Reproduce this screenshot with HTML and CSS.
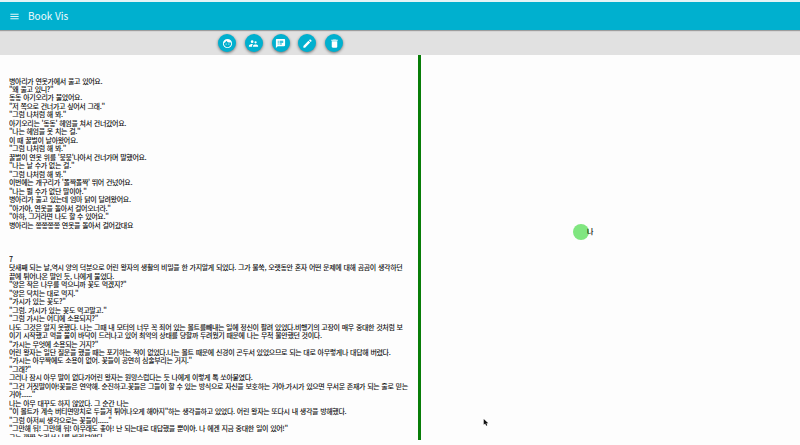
FILE: index.html
```
<!DOCTYPE html>
<html lang="ko">
<head>
<meta charset="utf-8">
<title>Book Vis</title>
<link rel="stylesheet" href="styles.css">
</head>
<body>
<header class="appbar">
  <svg class="menu" viewBox="0 0 24 24"><path d="M3 18h18v-2H3v2zm0-5h18v-2H3v2zm0-7v2h18V6H3z"/></svg>
  <h1 class="title">Book Vis</h1>
</header>
<nav class="toolbar">
  <button class="fab" aria-label="Face"><svg viewBox="0 0 24 24"><path d="M9 11.75a1.25 1.25 0 1 0 0 2.5 1.25 1.25 0 0 0 0-2.5zm6 0a1.25 1.25 0 1 0 0 2.5 1.25 1.25 0 0 0 0-2.5zM12 2a10 10 0 1 0 0 20 10 10 0 0 0 0-20zm0 18c-4.41 0-8-3.59-8-8 0-.29.02-.58.05-.86 2.36-1.05 4.23-2.98 5.21-5.37a9.97 9.97 0 0 0 10.41 3.97c.21.71.33 1.47.33 2.26 0 4.41-3.59 8-8 8z"/></svg></button>
  <button class="fab" aria-label="People"><svg viewBox="0 0 24 24"><path d="M16.5 12a2.5 2.5 0 1 0 0-5 2.5 2.5 0 0 0 0 5zM9 11a3 3 0 1 0 0-6 3 3 0 0 0 0 6zm7.5 3c-1.83 0-5.5.92-5.5 2.75V19h11v-2.25c0-1.83-3.67-2.75-5.5-2.75zM9 13c-2.33 0-7 1.17-7 3.5V19h7v-2.25c0-.85.33-2.34 2.37-3.47C10.500 13.100 9.660 13 9 13z"/></svg></button>
  <button class="fab" aria-label="Speech"><svg viewBox="0 0 24 24"><path d="M20 2H4c-1.100 0-1.990.9-1.990 2L2 22l4-4h14c1.100 0 2-.9 2-2V4c0-1.100-.9-2-2-2zM8 14H6v-2h2v2zm0-3H6V9h2v2zm0-3H6V6h2v2zm7 6h-5v-2h5v2zm3-3h-8V9h8v2zm0-3h-8V6h8v2z"/></svg></button>
  <button class="fab" aria-label="Edit"><svg viewBox="0 0 24 24"><path d="M3 17.250V21h3.750L17.810 9.940l-3.750-3.750L3 17.250zM20.710 7.040a1 1 0 0 0 0-1.410l-2.340-2.340a1 1 0 0 0-1.410 0l-1.830 1.830 3.750 3.750 1.830-1.830z"/></svg></button>
  <button class="fab" aria-label="Delete"><svg viewBox="0 0 24 24"><path d="M6 19c0 1.100.9 2 2 2h8c1.100 0 2-.9 2-2V7H6v12zM19 4h-3.500l-1-1h-5l-1 1H5v2h14V4z"/></svg></button>
</nav>
<main class="panes">
<section class="reader"><div class="text">병아리가 연못가에서 울고 있어요.
"왜 울고 있니?"
동동 아기오리가 물었어요.
"저 쪽으로 건너가고 싶어서 그래."
"그럼 나처럼 해 봐."
아기오리는 '동동' 헤엄을 쳐서 건너갔어요.
"나는 헤엄을 못 치는 걸."
이 때 꿀벌이 날아왔어요.
"그럼 나처럼 해 봐."
꿀벌이 연못 위를 '붕붕'나아서 건너가며 말했어요.
"나는 날 수가 없는 걸."
"그럼 나처럼 해 봐."
이번에는 개구리가 '폴짝폴짝' 뛰어 건넜어요.
"나는 뛸 수가 없단 말이야."
병아리가 울고 있는데 엄마 닭이 달려왔어요.
"아가야, 연못을 돌아서 걸어오너라."
"아하, 그거라면 나도 할 수 있어요."
병아리는 쫑쫑쫑쫑 연못을 돌아서 걸어갔대요



7
닷새째 되는 날,역시 양의 덕분으로 어린 왕자의 생활의 비밀을 한 가지알게 되었다. 그가 불쑥, 오랫동안 혼자 어떤 문제에 대해 곰곰이 생각하던
끝에 튀어나온 말인 듯, 나에게 물었다.
"양은 작은 나무를 먹으니까 꽃도 먹겠지?"
"양은 닥치는 대로 먹지."
"가시가 있는 꽃도?"
"그럼. 가시가 있는 꽃도 먹고말고."
"그럼 가시는 어디에 소용되지?"
나도 그것은 알지 못했다. 나는 그때 내 모터의 너무 꼭 죄어 있는 볼트를빼내는 일에 정신이 팔려 있었다.비행기의 고장이 매우 중대한 것처럼 보
이기 시작했고 먹을 물이 바닥이 드러나고 있어 최악의 상태를 당할까 두려웠기 때문에 나는 무척 불안했던 것이다.
"가시는 무엇에 소용되는 거지?"
어린 왕자는 일단 질문을 했을 때는 포기하는 적이 없었다.나는 볼트 때문에 신경이 곤두서 있었으므로 되는 대로 아무렇게나 대답해 버렸다.
"가시는 아무짝에도 소용이 없어. 꽃들이 공연히 심술부리는 거지."
"그래?"
그러나 잠시 아무 말이 없다가어린 왕자는 원망스럽다는 듯 나에게 이렇게 톡 쏘아붙였다.
"그건 거짓말이야!꽃들은 연약해. 순진하고.꽃들은 그들이 할 수 있는 방식으로 자신을 보호하는 거야.가시가 있으면 무서운 존재가 되는 줄로 믿는
거야......"
나는 아무 대꾸도 하지 않았다. 그 순간 나는
"이 볼트가 계속 버티면망치로 두들겨 튀어나오게 해야지"하는 생각을하고 있었다. 어린 왕자는 또다시 내 생각을 방해했다.
"그럼 아저씨 생각으로는 꽃들이......"
"그만해 둬! 그만해 둬! 아무래도 좋아! 난 되는대로 대답했을 뿐이야. 나 에겐 지금 중대한 일이 있어!"
그는 깜짝 놀라서 나를 바라보았다.</div></section>
<section class="graph">
  <div class="node"></div><span class="label">나</span>
  <svg class="cursor" viewBox="0 0 10 14"><path d="M1 0v10l2.500-2 1.800 4 2-1-1.800-3.500H9z"/></svg>
</section>
</main>
</body>
</html>
```
FILE: styles.css
```
* { box-sizing: border-box; }
body {
  margin: 0;
  height: 445px;
  overflow: hidden;
  background: #fdfdfd;
  color: #111;
  font-family: "Noto Sans CJK KR", sans-serif;
}
.appbar {
  position: relative;
  display: flex;
  align-items: center;
  height: 30px;
  padding-left: 9px;
  border-top: 2px solid #e4f3f6;
  background: #00b0cf;
  box-shadow: 0 1px 1px rgba(0, 0, 0, .3);
}
.menu { width: 11px; height: 11px; fill: #e3f6f9; }
.title {
  margin: 0 0 1px 8px;
  color: #f2fcfe;
  font: 400 10px/14px "Noto Sans CJK KR", sans-serif;
}
.toolbar {
  display: flex;
  gap: 8.750px;
  height: 25px;
  padding: 4px 0 0 218px;
  background: #e1e1e1;
}
.fab {
  display: flex;
  align-items: center;
  justify-content: center;
  width: 18px;
  height: 18px;
  padding: 0;
  border: 0;
  border-radius: 50%;
  background: #00b0cf;
  box-shadow: 0 1px 3px rgba(0, 0, 0, .5);
}
.fab svg { width: 11px; height: 11px; fill: #fff; }
.panes { display: flex; height: 385px; }
.reader {
  width: 421px;
  padding: 21.500px 0 0 9px;
  border-right: 3px solid #087d08;
}
.text {
  height: 360px;
  overflow: hidden;
  white-space: pre;
  font-size: 7px;
  font-weight: 500;
  letter-spacing: -.34px;
  word-spacing: .4px;
  line-height: 8.480px;
}
.graph { position: relative; flex: 1; }
.node {
  position: absolute;
  left: 152px;
  top: 169px;
  width: 16px;
  height: 16px;
  border-radius: 50%;
  background: #80e680;
}
.label {
  position: absolute;
  left: 166px;
  top: 171px;
  color: #000;
  font-size: 7px;
  font-weight: 500;
  line-height: 10px;
}
.cursor {
  position: absolute;
  left: 62px;
  top: 364px;
  width: 6px;
  height: 8px;
  fill: #111;
}
```
